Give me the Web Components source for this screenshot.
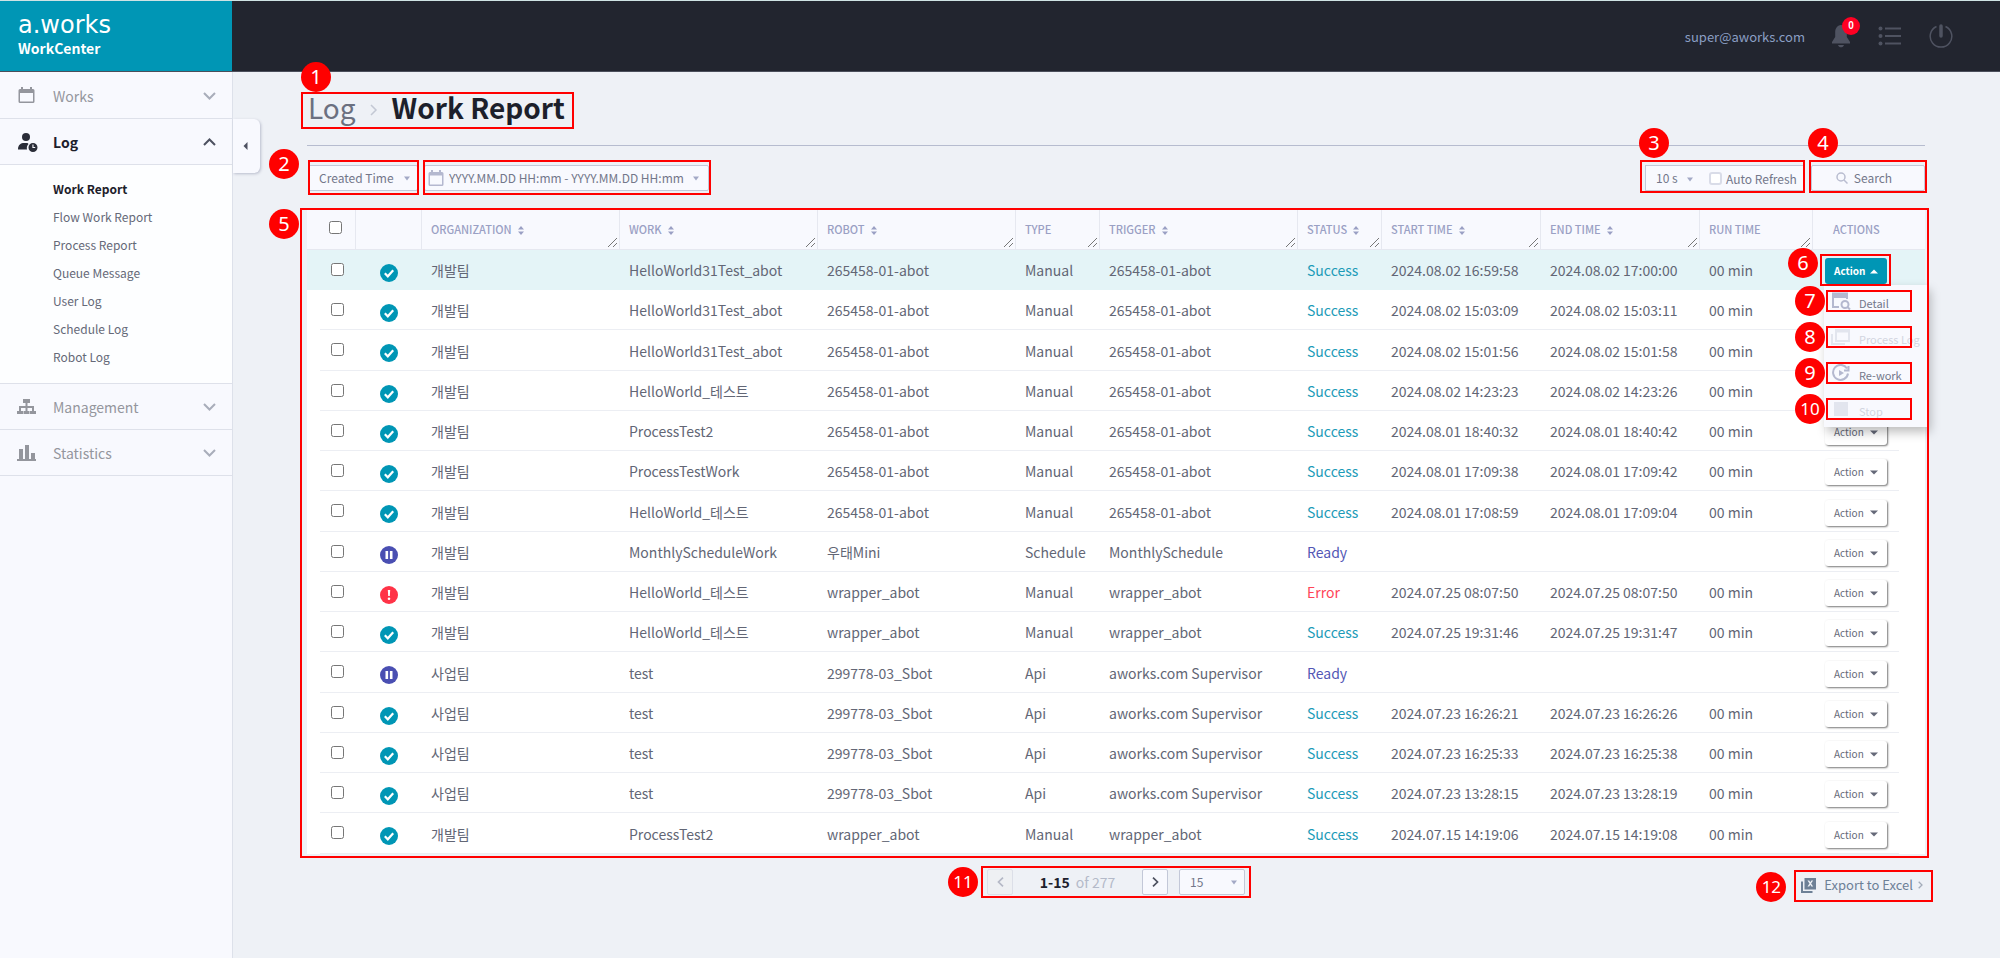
<!DOCTYPE html>
<html lang="en">
<head>
<meta charset="utf-8">
<meta name="viewport" content="width=device-width, initial-scale=1">
<title>WorkCenter - Work Report</title>
<style>
  body { margin: 0; background: #eef1f6; font-family: "Noto Sans CJK KR", "Noto Sans", sans-serif; font-size: 14px; color: #626675; }
</style>
</head>
<body>
<work-center></work-center>
<script>
const define = (name, html, setup) => {
  const template = document.createElement('template');
  template.innerHTML = html;
  customElements.define(name, class extends HTMLElement {
    constructor() {
      super();
      this.attachShadow({ mode: 'open' }).append(template.content.cloneNode(true));
    }
    connectedCallback() {
      if (setup && !this.ready) { this.ready = true; setup(this, this.shadowRoot); }
    }
  });
};

/* Red guide frame with an optional numbered badge around whatever is slotted in */
define('guide-frame', `
<style>
  :host { display: block; position: relative; }
  .frame { position: absolute; inset: var(--frame, 0); border: 2px solid #f00; pointer-events: none; z-index: 5; }
  .badge { position: absolute; left: var(--badge-x, 0); top: var(--badge-y, 0); width: 30px; height: 30px; border-radius: 50%;
    background: #f00; color: #fff; font: 20px/30px "Noto Sans", sans-serif; text-align: center; z-index: 6; }
  .badge.two { font-size: 17px; }
</style>
<slot></slot><div class="frame"></div><div class="badge"></div>`,
(el, root) => {
  const n = el.getAttribute('n');
  const badge = root.querySelector('.badge');
  if (!n) { badge.remove(); return; }
  badge.textContent = n;
  badge.classList.toggle('two', n.length > 1);
});

define('app-header', `
<style>
  :host { display: flex; height: 70px; border-top: 1px solid #cfe3e4; border-bottom: 1px solid #4b4f5b; background: #22252f; }
  .brand { box-sizing: border-box; width: 232px; background: #0096b5; color: #fff; padding: 10px 18px; }
  .logo { font: 24px/28px "DejaVu Sans", sans-serif; color: #fff; text-decoration: none; display: block; }
  .product { font-size: 14px; line-height: 18px; font-weight: 700; }
  .tools { flex: 1; display: flex; align-items: center; justify-content: flex-end; padding-right: 47px; }
  .user { font-size: 13px; line-height: 20px; color: #8b9fc4; margin: 2px 26px 0 0; text-decoration: none; }
  button { border: 0; background: none; padding: 0; display: block; position: relative; color: #4f5361; }
  button + button { margin-left: 27px; }
  svg { display: block; }
  .count { position: absolute; left: 11px; top: -7px; width: 18px; height: 18px; border-radius: 50%; background: #ff0023; color: #fff; font-size: 10px; line-height: 18px; font-weight: 700; text-align: center; }
</style>
<div class="brand"><a class="logo" href="#">a.works</a><div class="product">WorkCenter</div></div>
<div class="tools">
  <a class="user" href="#">super@aworks.com</a>
  <button aria-label="Notifications"><svg width="20" height="24" viewBox="0 0 20 24"><path fill="currentColor" d="M10 1C6 1.500 4.200 4.500 4.200 8v5L1 18v1.500h18V18l-3.200-5V8C15.800 4.500 14 1.500 10 1zM7 21h6c-.5 1.600-1.600 2.300-3 2.300S7.500 22.600 7 21z"/></svg><span class="count">0</span></button>
  <button aria-label="Task list"><svg width="24" height="22" viewBox="0 0 24 22"><g fill="currentColor"><circle cx="2.500" cy="3.500" r="2"/><circle cx="2.500" cy="11" r="2"/><circle cx="2.500" cy="18.500" r="2"/><path d="M7 2.500h16v2H7zM7 10h16v2H7zM7 17.500h16v2H7z"/></g></svg></button>
  <button aria-label="Log out"><svg width="24" height="24" viewBox="0 0 24 24" fill="none" stroke="currentColor"><path stroke-width="1.500" d="M7.500 2.500a10.800 10.800 0 1 0 9 0"/><path stroke-width="3.500" stroke-linecap="round" d="M12 2v10"/></svg></button>
</div>`);

define('nav-section', `
<style>
  :host { display: block; border-bottom: 1px solid #dee1ea; }
  button { width: 100%; height: 45px; border: 0; background: #f8f9fe; padding: 0 16px 0 17px; display: flex; align-items: center; color: #94969d; font: 14px/20px "Noto Sans CJK KR", sans-serif; text-align: left; }
  :host([open]) button { color: #1d202b; font-weight: 700; }
  .icon { display: block; width: 36px; height: 20px; color: #94969d; }
  :host([open]) .icon { color: #2a2d38; }
  .label { flex: 1; }
  .arrow { stroke: #a9adba; }
  :host([open]) .arrow { stroke: #4d5160; transform: rotate(180deg); }
  .items { background: #fdfeff; padding: 10px 0 12px; border-top: 1px solid #dee1ea; }
  :host(:not([open])) .items { display: none; }
</style>
<button><span class="icon"><slot name="icon"></slot></span><span class="label"></span>
<svg width="13" height="8" viewBox="0 0 13 8" fill="none" class="arrow" stroke-width="2"><path d="M1 1l5.500 5.500L12 1"/></svg></button>
<div class="items"><slot></slot></div>`,
(el, root) => { root.querySelector('.label').textContent = el.getAttribute('label'); });

define('nav-link', `
<style>
  :host { display: block; }
  a { display: block; padding-left: 53px; line-height: 28px; font-size: 12px; color: #656978; text-decoration: none; }
  :host([current]) a { color: #1d202b; font-weight: 700; }
</style>
<a href="#"><slot></slot></a>`);

define('side-nav', `
<style>
  :host { display: block; background: #f8f9fe; border-right: 1px solid #dde1ea; position: relative; padding-top: 1px; }
  .fold { position: absolute; left: 233px; top: 47px; width: 27px; height: 54px; border: 0; border-radius: 0 6px 6px 0; background: #f8f9fe; box-shadow: 1px 1px 3px #b9bdcc; padding: 0 3px 0 0; display: grid; place-items: center; }
</style>
<nav>
  <nav-section label="Works"><svg slot="icon" width="20" height="20" viewBox="0 0 20 20"><path fill="currentColor" fill-rule="evenodd" d="M4 1h2v2h7V1h2v2h1q1.500 0 1.500 1.500v11q0 1.500-1.500 1.500H3q-1.500 0-1.500-1.500v-11Q1.500 3 3 3h1zM3 7v8.500h13V7z"/></svg></nav-section>
  <nav-section label="Log" open><svg slot="icon" width="22" height="20" viewBox="0 0 22 20"><g fill="currentColor"><circle cx="9" cy="5" r="4"/><path d="M1 17.500c0-5 3-6.500 6-6.500h3.500l1 1c-1.500 1.500-2 3.500-1.500 5.500z"/><path fill-rule="evenodd" d="M16 11a4.500 4.500 0 1 1 0 9 4.500 4.500 0 0 1 0-9zm-.6 1.500V16h2.800v-1.100h-1.700v-2.400z"/></g></svg>
    <nav-link current>Work Report</nav-link><nav-link>Flow Work Report</nav-link><nav-link>Process Report</nav-link><nav-link>Queue Message</nav-link><nav-link>User Log</nav-link><nav-link>Schedule Log</nav-link><nav-link>Robot Log</nav-link>
  </nav-section>
  <nav-section label="Management"><svg slot="icon" width="20" height="20" viewBox="0 0 20 20"><path fill="currentColor" d="M6 2h7v4h-2.500v3H17v5h2v3h-6v-3h2v-3h-4.500v3h2v3h-6v-3h2v-3H4v3h2v3H0v-3h2V9h6.500V6H6z"/></svg></nav-section>
  <nav-section label="Statistics"><svg slot="icon" width="20" height="20" viewBox="0 0 20 20"><path fill="currentColor" d="M0 16h19v2H0zM2 6h4v10H2zM8 2h4v14H8zM14 10h4v6h-4z"/></svg></nav-section>
</nav>
<button class="fold" aria-label="Collapse menu"><svg width="5" height="8" viewBox="0 0 5 8"><path fill="#4d5160" d="M4.500 0v8L.5 4z"/></svg></button>`);

/* Native select with its own arrow */
define('drop-down', `
<style>
  :host { display: block; position: relative; }
  select { appearance: none; box-sizing: border-box; display: block; width: 100%; height: 26px; margin: 0; border: 1px solid #c3c8d8; border-radius: 2px; background: #f8f9fe; color: #73778a; padding: 0 20px 0 10px; font: 12px/22px "Noto Sans CJK KR", sans-serif; }
  :host([plain]) select { border: 0; height: 24px; background: none; }
  svg { position: absolute; right: 8px; top: 11px; }
</style>
<select><option></option></select>
<svg width="6" height="5" viewBox="0 0 6 5"><path fill="#a3a9c6" d="M0 .5h6L3 4.500z"/></svg>`,
(el, root) => {
  root.querySelector('option').textContent = el.getAttribute('value');
  root.querySelector('select').setAttribute('aria-label', el.getAttribute('label'));
});

define('filter-bar', `
<style>
  :host { display: flex; align-items: flex-start; padding: 19px 0 17px; }
  .space { flex: 1; }
  .time { width: 110px; margin: 0 6px 0 1px; }
  .date { width: 285px; }
  .range { box-sizing: border-box; height: 26px; border: 1px solid #c3c8d8; border-radius: 2px; background: #f8f9fe; display: flex; align-items: center; padding: 0 9px 0 3px; }
  .range svg { flex: none; }
  input[type=text] { flex: 1; min-width: 0; border: 0; background: none; padding: 0; margin-left: 5px; font: 12px/22px "Noto Sans CJK KR", sans-serif; color: #73778a; }
  input::placeholder { color: #73778a; opacity: 1; }
  .refresh { width: 159px; margin-right: 7px; }
  .group { box-sizing: border-box; height: 26px; border: 1px solid #c3c8d8; border-right: 0; background: #f8f9fe; display: flex; align-items: center; }
  .group drop-down { width: 55px; }
  label { display: flex; align-items: center; font-size: 12px; color: #73778a; margin-left: 8px; gap: 4px; white-space: nowrap; }
  input[type=checkbox] { appearance: none; box-sizing: border-box; width: 13px; height: 13px; margin: 0; border: 2px solid #d9dce8; border-radius: 3px; background: #fff; }
  .search { width: 114px; }
  .search button { box-sizing: border-box; width: 100%; height: 26px; border: 1px solid #c3c8d8; border-radius: 2px; background: #f8f9fe; color: #73778a; font: 12px/22px "Noto Sans CJK KR", sans-serif; display: flex; align-items: center; justify-content: center; gap: 6px; padding: 0 8px 0 0; }
</style>
<guide-frame class="time" n="2" style="--frame:-5px -1px -4px 0; --badge-x:-39px; --badge-y:-16px"><drop-down value="Created Time" label="Time field"></drop-down></guide-frame>
<guide-frame class="date" style="--frame:-5px -2px -4px -1px"><div class="range">
  <svg width="16" height="16" viewBox="0 0 16 16"><path fill="#b4b8cf" fill-rule="evenodd" d="M3 0h2v2h6V0h2v2h1q1.500 0 1.500 1.500v11q0 1.500-1.500 1.500H2q-1.500 0-1.500-1.500v-11Q.5 2 2 2h1zM2 5.500v9h12v-9z"/></svg>
  <input type="text" aria-label="Period" placeholder="YYYY.MM.DD HH:mm - YYYY.MM.DD HH:mm">
  <svg width="6" height="5" viewBox="0 0 6 5"><path fill="#a3a9c6" d="M0 .5h6L3 4.500z"/></svg></div></guide-frame>
<div class="space"></div>
<guide-frame class="refresh" n="3" style="--frame:-5px -1px -2px -5px; --badge-x:-6px; --badge-y:-37px"><div class="group"><drop-down plain value="10 s" label="Refresh interval"></drop-down><label><input type="checkbox">Auto Refresh</label></div></guide-frame>
<guide-frame class="search" n="4" style="--frame:-5px -2px -2px -2px; --badge-x:-3px; --badge-y:-37px"><button><svg width="12" height="12" viewBox="0 0 12 12" fill="none" stroke="#b9bdd0" stroke-width="1.500"><circle cx="5" cy="5" r="4"/><path d="M8 8l3.500 3.500"/></svg>Search</button></guide-frame>`);

define('status-icon', `
<style>
  :host { display: inline-block; width: 18px; height: 18px; vertical-align: middle; }
  svg { display: block; }
</style>
<svg width="18" height="18" viewBox="0 0 18 18" aria-hidden="true"></svg>`,
(el, root) => {
  root.querySelector('svg').innerHTML = {
    Success: '<circle cx="9" cy="9" r="9" fill="#0096b5"/><path d="M4.800 9.300l3 3 5.400-6" fill="none" stroke="#fff" stroke-width="2.200"/>',
    Ready: '<circle cx="9" cy="9" r="9" fill="#4a4fb2"/><path d="M5.500 5h2.600v8H5.500zM9.900 5h2.600v8H9.900z" fill="#fff"/>',
    Error: '<circle cx="9" cy="9" r="9" fill="#ff3347"/><path d="M7.800 4h2.400l-.4 6H8.200z" fill="#fff"/><circle cx="9" cy="12.700" r="1.300" fill="#fff"/>'
  }[el.getAttribute('state')];
});

define('action-menu', `
<style>
  :host { display: block; box-sizing: border-box; width: 103px; height: 142px; padding: 5px 15px 0 2px; background: #f8f9fe; box-shadow: 3px 5px 10px #0004; }
  guide-frame { height: 22px; margin-bottom: 14px; --frame: 0; --badge-x: -31px; --badge-y: -4px; }
  button { box-sizing: border-box; width: 100%; height: 22px; border: 0; background: none; padding: 0 0 0 5px; display: flex; align-items: center; gap: 8px; color: #73778a; font: 11px/16px "Noto Sans CJK KR", sans-serif; white-space: nowrap; }
  button:disabled { color: #d2d5e0; }
  svg { flex: none; color: #b4b8cf; }
  button span { padding-top: 4px; }
  button:disabled svg { color: #e2e5ee; }
</style>
<guide-frame n="7"><button><svg width="20" height="18" viewBox="0 0 20 18" fill="none" stroke="currentColor" stroke-width="2"><path d="M8 15H2V2h14v5"/><path fill="currentColor" d="M2 1.500h14V5H2z"/><circle cx="14" cy="12.500" r="3.500"/><path d="M16.500 15l2.500 2.500"/></svg><span>Detail</span></button></guide-frame>
<guide-frame n="8"><button disabled><svg width="20" height="18" viewBox="0 0 20 18" fill="none" stroke="currentColor" stroke-width="2"><path d="M5 2h13v11H5zM5 3.500h13M1 6v10h13"/></svg><span>Process Log</span></button></guide-frame>
<guide-frame n="9"><button><svg width="20" height="18" viewBox="0 0 20 18" fill="none" stroke="currentColor" stroke-width="2"><path d="M16 4.500A7.500 7.500 0 1 0 17 9.500M17.500 2v4.500H13"/><path fill="currentColor" stroke="none" d="M8 6l5 3-5 3z"/></svg><span>Re-work</span></button></guide-frame>
<guide-frame n="10"><button disabled><svg width="20" height="18" viewBox="0 0 20 18"><path fill="currentColor" d="M3 2h14v14H3z"/></svg><span>Stop</span></button></guide-frame>`);

const actionButton = '<button>Action<svg width="8" height="5" viewBox="0 0 8 5"><path fill="currentColor" d="M0 .5h8L4 4.500z"/></svg></button>';
define('action-button', `
<style>
  :host { display: block; position: relative; width: 62px; margin: 2px 0 0 12px; }
  :host([covered]) { visibility: hidden; }
  button { box-sizing: border-box; width: 62px; height: 26px; border: 0; border-radius: 3px; background: #fff; color: #656978; box-shadow: 1px 1px 2px #0008; padding: 0 9px; display: flex; align-items: center; justify-content: space-between; font: 10px/20px "Noto Sans CJK KR", sans-serif; }
  :host([open]) button { background: #0096b5; color: #fff; font-weight: 700; box-shadow: none; }
  :host([open]) button svg { transform: rotate(180deg); }
  guide-frame { --frame: -4px -4px -2px -5px; --badge-x: -37px; --badge-y: -10px; }
  action-menu { position: absolute; left: -1px; top: 27px; z-index: 4; }
</style>`,
(el, root) => {
  root.append(document.createRange().createContextualFragment(
    el.hasAttribute('open') ? `<guide-frame n="6">${actionButton}</guide-frame><action-menu></action-menu>` : actionButton));
});

const columns = [['', 49], ['', 66], ['ORGANIZATION', 198, 1], ['WORK', 198, 1], ['ROBOT', 198, 1], ['TYPE', 84], ['TRIGGER', 198, 1], ['STATUS', 84, 1], ['START TIME', 159, 1], ['END TIME', 159, 1], ['RUN TIME', 113], ['ACTIONS', 112]];
const A = '개발팀', B = '사업팀', R = '265458-01-abot', S = '299778-03_Sbot', W = 'wrapper_abot', V = 'aworks.com Supervisor';
const rows = [
  [A, 'HelloWorld31Test_abot', R, 'Manual', R, 'Success', '2024.08.02 16:59:58', '2024.08.02 17:00:00'],
  [A, 'HelloWorld31Test_abot', R, 'Manual', R, 'Success', '2024.08.02 15:03:09', '2024.08.02 15:03:11'],
  [A, 'HelloWorld31Test_abot', R, 'Manual', R, 'Success', '2024.08.02 15:01:56', '2024.08.02 15:01:58'],
  [A, 'HelloWorld_테스트', R, 'Manual', R, 'Success', '2024.08.02 14:23:23', '2024.08.02 14:23:26'],
  [A, 'ProcessTest2', R, 'Manual', R, 'Success', '2024.08.01 18:40:32', '2024.08.01 18:40:42'],
  [A, 'ProcessTestWork', R, 'Manual', R, 'Success', '2024.08.01 17:09:38', '2024.08.01 17:09:42'],
  [A, 'HelloWorld_테스트', R, 'Manual', R, 'Success', '2024.08.01 17:08:59', '2024.08.01 17:09:04'],
  [A, 'MonthlyScheduleWork', '우태Mini', 'Schedule', 'MonthlySchedule', 'Ready', '', ''],
  [A, 'HelloWorld_테스트', W, 'Manual', W, 'Error', '2024.07.25 08:07:50', '2024.07.25 08:07:50'],
  [A, 'HelloWorld_테스트', W, 'Manual', W, 'Success', '2024.07.25 19:31:46', '2024.07.25 19:31:47'],
  [B, 'test', S, 'Api', V, 'Ready', '', ''],
  [B, 'test', S, 'Api', V, 'Success', '2024.07.23 16:26:21', '2024.07.23 16:26:26'],
  [B, 'test', S, 'Api', V, 'Success', '2024.07.23 16:25:33', '2024.07.23 16:25:38'],
  [B, 'test', S, 'Api', V, 'Success', '2024.07.23 13:28:15', '2024.07.23 13:28:19'],
  [A, 'ProcessTest2', W, 'Manual', W, 'Success', '2024.07.15 14:19:06', '2024.07.15 14:19:08']
];

define('log-table', `
<style>
  :host { display: block; }
  table { width: 100%; table-layout: fixed; border-collapse: separate; border-spacing: 0; background: #fff; }
  th { position: relative; box-sizing: border-box; height: 42px; padding: 0 0 0 9px; text-align: left; background: #f8f9fe; border-bottom: 1px solid #e6e8f0; border-right: 1px solid #e6e8f0; font-size: 11px; line-height: 16px; font-weight: 500; color: #9aa0c4; white-space: nowrap; }
  th:last-child { padding-left: 20px; border-right: 0; }
  th .sort { margin-left: 6px; vertical-align: -1px; }
  th .grip { position: absolute; right: 1px; bottom: 1px; }
  td { box-sizing: border-box; height: 40px; padding: 0 0 0 9px; font-size: 14px; line-height: 20px; white-space: nowrap; }
  tr:nth-child(4n+3) td { height: 41px; }
  td:last-child { padding: 0; }
  tbody tr { background: linear-gradient(#eceef3, #eceef3) 13px 100% / calc(100% - 39px) 1px no-repeat; }
  tbody tr:first-child { background: #e4f4f7; }
  th:first-child { padding: 0 0 2px 22px; }
  td:first-child { padding: 0 0 2px 24px; }
  td:nth-child(2) { padding: 2px 0 0 24px; }
  input { width: 13px; height: 13px; margin: 0; display: block; }
  .Success { color: #1c9bb8; } .Ready { color: #5357b5; } .Error { color: #ff4557; }
</style>
<table><colgroup></colgroup><thead><tr></tr></thead><tbody></tbody></table>`,
(el, root) => {
  root.querySelector('colgroup').innerHTML = columns.map(c => `<col style="width:${c[1]}px">`).join('');
  const sort = '<svg class="sort" width="6" height="9" viewBox="0 0 6 9"><path fill="currentColor" d="M0 3.500L3 0l3 3.500zM0 5.500h6L3 9z"/></svg>';
  const grip = '<svg class="grip" width="11" height="11" viewBox="0 0 11 11" stroke="#777" fill="none"><path d="M1 10l9-9M6 10l4-4"/></svg>';
  root.querySelector('thead tr').innerHTML = columns.map((c, i) =>
    `<th>${i === 0 ? '<input type="checkbox" aria-label="Select all">' : c[0]}${c[2] ? sort : ''}${i > 1 && i < 11 ? grip : ''}</th>`).join('');
  /* the open menu of the first row lies over the next three buttons */
  root.querySelector('tbody').innerHTML = rows.map((r, n) => `<tr>
    <td><input type="checkbox" aria-label="Select row ${n + 1}"></td>
    <td><status-icon state="${r[5]}"></status-icon></td>
    ${r.map((v, i) => `<td${i === 5 ? ` class="${v}"` : ''}>${v}</td>`).join('')}
    <td>${r[6] ? '00 min' : ''}</td>
    <td><action-button${n === 0 ? ' open' : n < 4 ? ' covered' : ''}></action-button></td></tr>`).join('');
});

define('page-bar', `
<style>
  :host { display: grid; grid-template-columns: 1fr auto 1fr; padding-top: 15px; align-items: start; }
  .pager { grid-column: 2; }
  .row { display: flex; align-items: center; width: 258px; }
  .row button { box-sizing: border-box; width: 26px; height: 26px; border: 1px solid #c3c8d8; border-radius: 2px; background: #f8f9fe; display: grid; place-items: center; padding: 0; color: #4d5160; }
  .row button:disabled { background: #eef0f3; border-color: #dcdfe8; color: #b4b8c6; }
  .range { flex: 1; text-align: center; font-size: 14px; line-height: 20px; color: #b4bac9; }
  b { color: #1d202b; margin-right: 6px; }
  drop-down { width: 66px; margin-left: 11px; }
  .export { justify-self: end; margin: 4px 2px 0 0; }
  a { display: flex; align-items: center; height: 24px; color: #6d8096; font-size: 13px; line-height: 20px; text-decoration: none; white-space: nowrap; }
  a .xls { margin-right: 8px; }
  a .go { margin-left: 5px; }
</style>
<guide-frame class="pager" n="11" style="--frame:-3px -6px -3px -6px; --badge-x:-39px; --badge-y:-2px"><div class="row">
  <button disabled aria-label="Previous page"><svg width="7" height="10" viewBox="0 0 7 10" fill="none" stroke="currentColor" stroke-width="1.700"><path d="M6 .7L1.500 5 6 9.300"/></svg></button>
  <span class="range"><b>1-15</b>of 277</span>
  <button aria-label="Next page"><svg width="7" height="10" viewBox="0 0 7 10" fill="none" stroke="currentColor" stroke-width="1.700"><path d="M1 .7L5.500 5 1 9.300"/></svg></button>
  <drop-down value="15" label="Rows per page"></drop-down></div></guide-frame>
<guide-frame class="export" n="12" style="--frame:-3px -10px -5px -7px; --badge-x:-45px; --badge-y:-1px"><a href="#"><svg class="xls" width="15" height="15" viewBox="0 0 15 15"><path fill="#6d8096" fill-rule="evenodd" d="M3.500 0H15v11.500H3.500zM6.500 2.500l2 3-2 3h1.700l1.100-1.800 1.100 1.800h1.700l-2-3 2-3h-1.700L9.300 4.300 8.200 2.500z"/><path fill="#6d8096" d="M0 3.500h2V13h9.500v2H0z"/></svg>Export to Excel<svg class="go" width="5" height="8" viewBox="0 0 5 8" fill="none" stroke="#a3acba"><path stroke-width="1.300" d="M.7.7L4 4 .7 7.300"/></svg></a></guide-frame>`);

define('page-title', `
<style>
  :host { display: block; border-bottom: 1px solid #b6bccf; padding: 20px 0 16px 1px; }
  guide-frame { width: max-content; }
  h1 { margin: 0; padding-bottom: 7px; font-size: 28px; line-height: 30px; font-weight: 700; color: #1c1f2b; display: flex; align-items: center; }
  h1 a { color: #6b7080; font-weight: 400; text-decoration: none; }
  svg { margin: 6px 14px 0 14px; }
</style>
<guide-frame n="1" style="--frame:0 -9px 0 -7px; --badge-x:-7px; --badge-y:-30px"><h1><a href="#">Log</a><svg width="8" height="12" viewBox="0 0 8 12" fill="none" stroke="#c3c8d4" stroke-width="1.500"><path d="M1 1l5 5-5 5"/></svg>Work Report</h1></guide-frame>`);

define('work-center', `
<style>
  :host { display: grid; grid-template-columns: 233px minmax(0, 1fr); grid-template-rows: auto 1fr; min-height: 100vh; }
  app-header { grid-column: 1 / -1; }
  main { padding: 0 75px 24px 74px; }
</style>
<app-header></app-header>
<side-nav></side-nav>
<main>
  <page-title></page-title>
  <filter-bar></filter-bar>
  <guide-frame n="5" style="--frame:0 -4px -4px -7px; --badge-x:-38px; --badge-y:1px"><log-table></log-table></guide-frame>
  <page-bar></page-bar>
</main>`);
</script>
</body>
</html>
